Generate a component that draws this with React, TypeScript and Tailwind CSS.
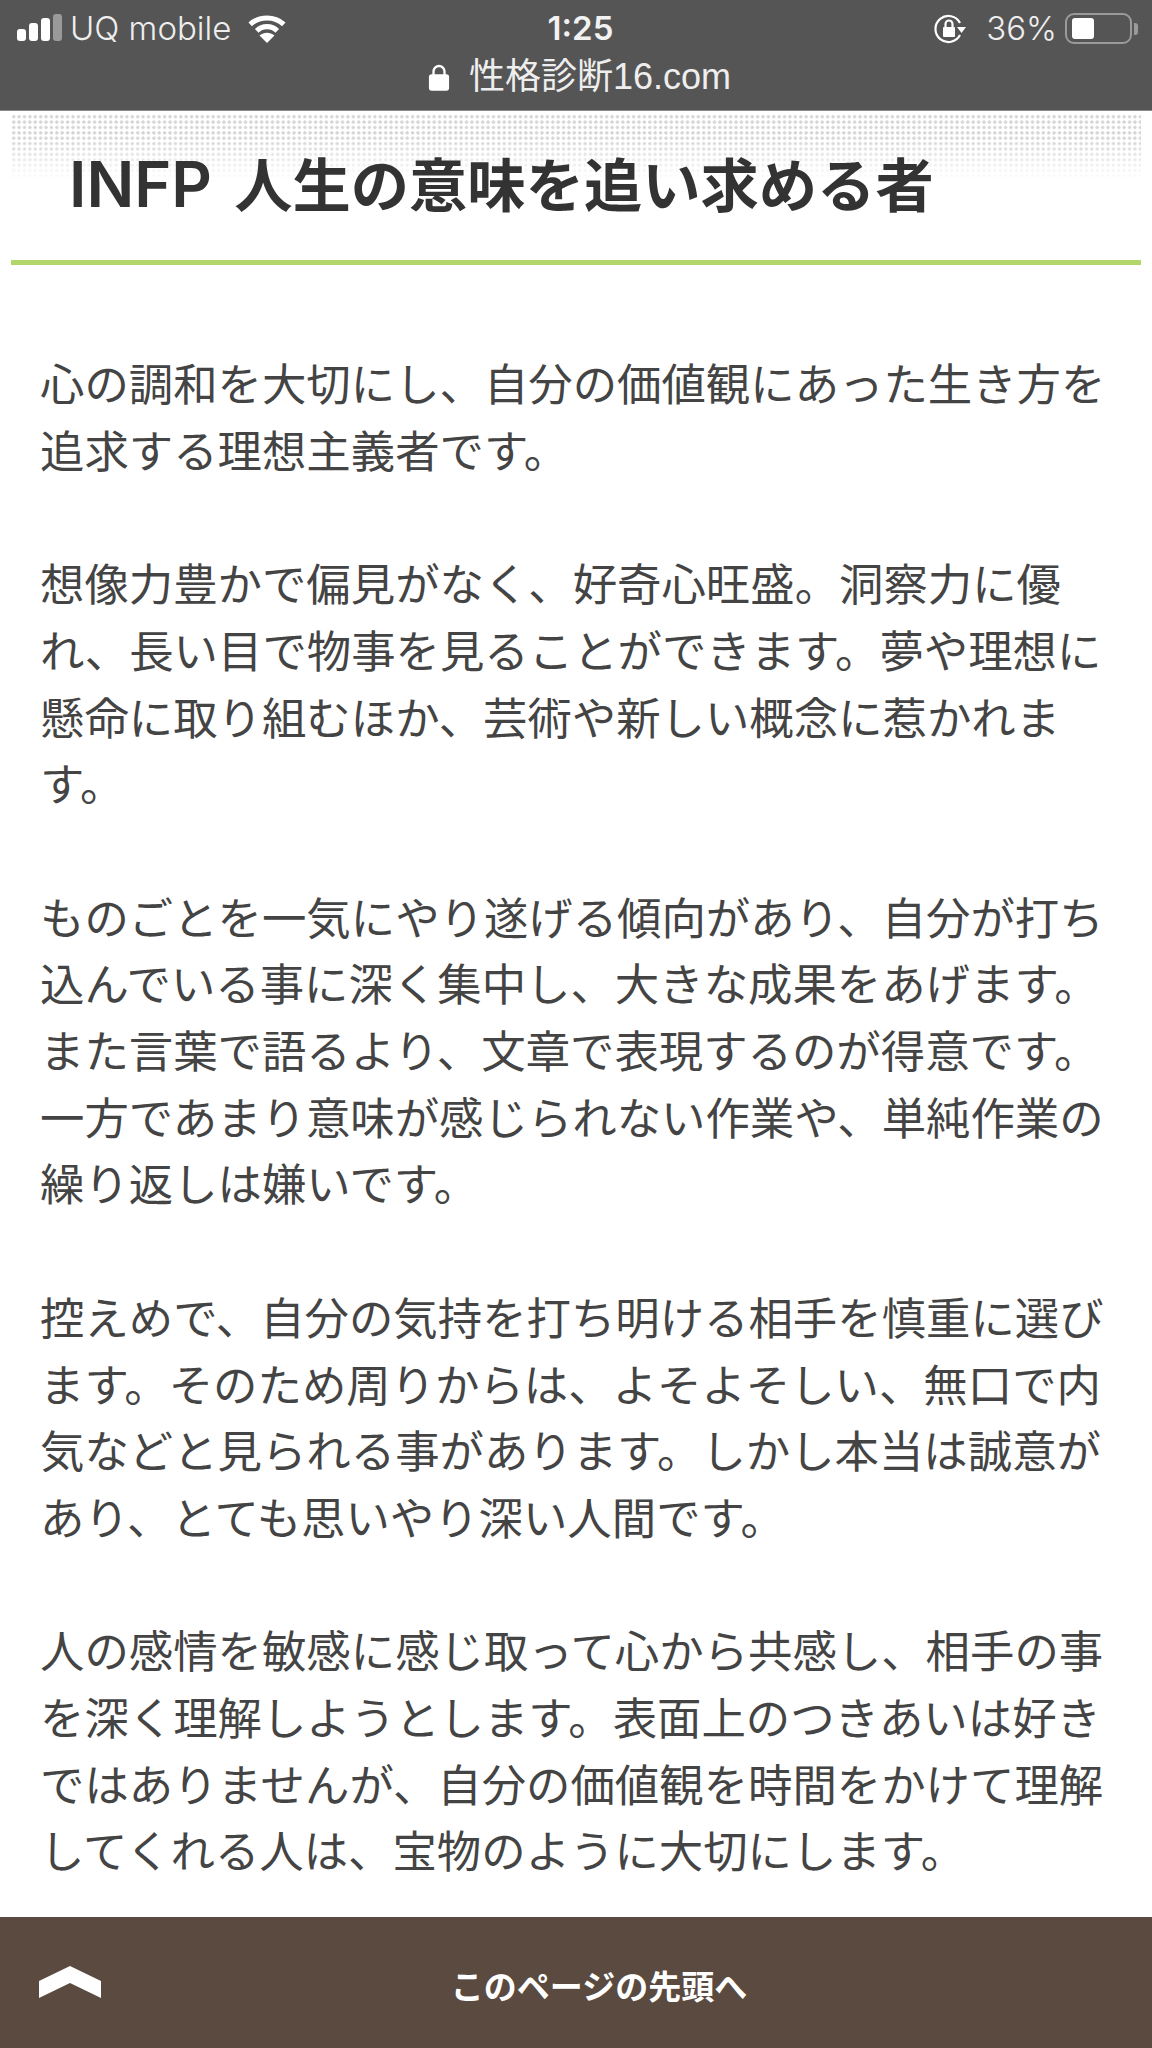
const paragraphs = [
  ['心の調和を大切にし、自分の価値観にあった生き方を', '追求する理想主義者です。'],
  [
    '想像力豊かで偏見がなく、好奇心旺盛。洞察力に優',
    'れ、長い目で物事を見ることができます。夢や理想に',
    '懸命に取り組むほか、芸術や新しい概念に惹かれま',
    'す。',
  ],
  [
    'ものごとを一気にやり遂げる傾向があり、自分が打ち',
    '込んでいる事に深く集中し、大きな成果をあげます。',
    'また言葉で語るより、文章で表現するのが得意です。',
    '一方であまり意味が感じられない作業や、単純作業の',
    '繰り返しは嫌いです。',
  ],
  [
    '控えめで、自分の気持を打ち明ける相手を慎重に選び',
    'ます。そのため周りからは、よそよそしい、無口で内',
    '気などと見られる事があります。しかし本当は誠意が',
    'あり、とても思いやり深い人間です。',
  ],
  [
    '人の感情を敏感に感じ取って心から共感し、相手の事',
    'を深く理解しようとします。表面上のつきあいは好き',
    'ではありませんが、自分の価値観を時間をかけて理解',
    'してくれる人は、宝物のように大切にします。',
  ],
]

function StatusBar() {
  return (
    <div className="h-[111px] bg-[#555555] text-white border-b border-[#8a8a8a] font-['Inter','Noto_Sans_CJK_JP',sans-serif]">
      <div className="flex h-[57px] items-center justify-between pl-[17px] pr-[14px]">
        <div className="flex h-full w-[326px] items-center">
          <div className="flex items-end gap-[3px] self-end pb-[16px]">
            <span className="h-[12px] w-[9px] rounded-[3px] bg-white" />
            <span className="h-[18px] w-[9px] rounded-[3px] bg-white" />
            <span className="h-[23px] w-[9px] rounded-[3px] bg-white" />
            <span className="h-[27px] w-[9px] rounded-[3px] bg-[#9a9a9a]" />
          </div>
          <span className="ml-[8px] text-[33px] font-light text-[#eeeeee]">UQ mobile</span>
          <svg className="ml-[16px]" width="40" height="28" viewBox="0 0 40 30" fill="none" stroke="white" strokeWidth="5.5">
            <path d="M2 10 C12 1 28 1 38 10" />
            <path d="M9 17 C15 11 25 11 31 17" />
            <path d="M20 30 L12 22 C17 18 23 18 28 22 Z" fill="white" stroke="none" />
          </svg>
        </div>
        <span className="text-[33px] font-semibold text-[#f2f2f2]">1:25</span>
        <div className="flex w-[320px] items-center justify-end">
          <svg width="32" height="30" viewBox="0 0 32 30" fill="none" stroke="white" strokeWidth="2.2">
            <path d="M26 21 A13 13 0 1 1 26 9" />
            <path d="M23 13 H32 L27.5 19 Z" fill="white" stroke="none" />
            <rect x="9" y="13" width="12" height="10" rx="1" fill="white" stroke="none" />
            <path d="M11.5 13 V10 A3.5 3.5 0 0 1 18.5 10 V13" />
          </svg>
          <span className="ml-[20px] text-[33px] font-light text-[#eeeeee]">36%</span>
          <div className="ml-[8px] flex h-[31px] w-[67px] items-center rounded-[9px] border-[2px] border-[#9a9a9a] p-[3px]">
            <div className="ml-[2px] h-full w-[22px] rounded-[3px] bg-white" />
          </div>
          <div className="ml-[2px] h-[12px] w-[4px] rounded-r-[3px] bg-[#9a9a9a]" />
        </div>
      </div>
      <div className="flex items-center justify-center pl-[5px]">
        <svg className="ml-[2px]" width="22" height="28" viewBox="0 0 24 30" fill="none">
          <path d="M6 13 V9 A6 6 0 0 1 18 9 V13" stroke="white" strokeWidth="2.5" />
          <rect x="1" y="12" width="22" height="18" rx="3" fill="white" />
        </svg>
        <span className="ml-[19px] text-[36px] leading-[40px] font-['Liberation_Sans','Noto_Sans_CJK_JP',sans-serif] text-[#eeeeee]">
          性格診断16.com
        </span>
      </div>
    </div>
  )
}

export default function App() {
  return (
    <div className="relative h-[2048px] overflow-hidden bg-white font-['Liberation_Sans','Noto_Sans_CJK_JP',sans-serif]">
      <StatusBar />

      {/* Heading */}
      <div className="relative mx-[11px] h-[154px] border-b-[5px] border-[#b2d668]">
        <div className="absolute inset-x-0 top-[3px] h-[66px] bg-[radial-gradient(#d6d6d6_1.4px,transparent_1.6px)] bg-[length:5.4px_5.4px] [mask-image:linear-gradient(black_35%,transparent)]" />
        <h1 className="relative pl-[58px] pt-[38px] text-[58.3px] font-bold leading-[70px] text-[#333333]">
          <span className="mr-[6px] font-['Inter',sans-serif] text-[63px] font-semibold">INFP</span> 人生の意味を追い求める者
        </h1>
      </div>

      {/* Body */}
      <div className="flex flex-col gap-[66.7px] pl-[40px] pt-[88px] text-[44.4px] leading-[66.7px] text-[#444444]">
        {paragraphs.map((lines, i) => (
          <p key={i}>
            {lines.map((line, j) => (
              <span key={j} className="block whitespace-nowrap">
                {line}
              </span>
            ))}
          </p>
        ))}
      </div>

      {/* Back to top bar */}
      <div className="absolute inset-x-0 bottom-0 flex h-[131px] items-center justify-center bg-[#5a4a40]">
        <svg className="absolute left-[39px] top-[49px]" width="62" height="32" viewBox="0 0 62 32" fill="white">
          <path d="M31 0 L62 15 V32 L31 17 L0 32 V15 Z" />
        </svg>
        <span className="pl-[46px] pt-[10px] text-[33px] font-bold text-white">このページの先頭へ</span>
      </div>
    </div>
  )
}
